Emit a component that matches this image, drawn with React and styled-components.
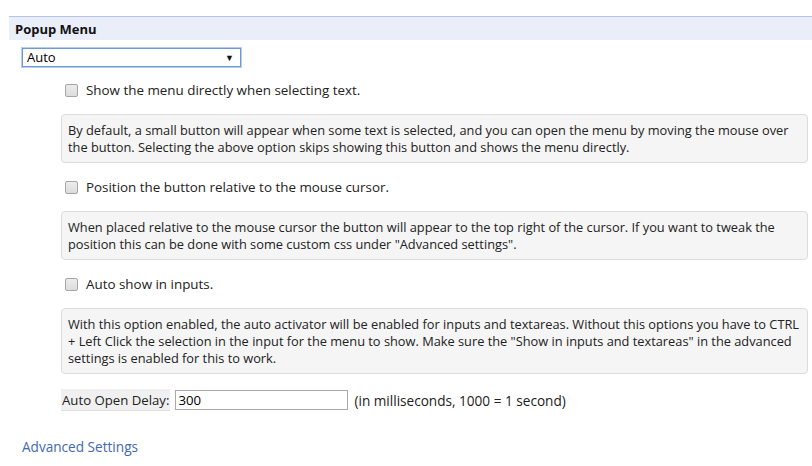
import React from "react";
import styled, { createGlobalStyle } from "styled-components";

const GlobalStyle = createGlobalStyle`
  html, body {
    margin: 0;
    padding: 0;
    background: #fff;
  }
  body {
    font-family: "Open Sans", "Liberation Sans", Arial, sans-serif;
    font-size: 12.8px;
    color: #222;
  }
`;

const options = [
  {
    label: "Show the menu directly when selecting text.",
    help:
      "By default, a small button will appear when some text is selected, and you can open the menu by moving the mouse over the button. Selecting the above option skips showing this button and shows the menu directly.",
  },
  {
    label: "Position the button relative to the mouse cursor.",
    help:
      'When placed relative to the mouse cursor the button will appear to the top right of the cursor. If you want to tweak the position this can be done with some custom css under "Advanced settings".',
  },
  {
    label: "Auto show in inputs.",
    help:
      'With this option enabled, the auto activator will be enabled for inputs and textareas. Without this options you have to CTRL + Left Click the selection in the input for the menu to show. Make sure the "Show in inputs and textareas" in the advanced settings is enabled for this to work.',
  },
];

export default function App() {
  return (
    <Page>
      <GlobalStyle />
      <SectionHeader>Popup Menu</SectionHeader>
      <SelectBox>
        <span>Auto</span>
        <Arrow>▼</Arrow>
      </SelectBox>
      <Options>
        {options.map((o) => (
          <Option key={o.label}>
            <CheckRow>
              <CheckBox />
              <span>{o.label}</span>
            </CheckRow>
            <HelpBox>{o.help}</HelpBox>
          </Option>
        ))}
        <DelayRow>
          <DelayLabel>Auto Open Delay:</DelayLabel>
          <DelayInput>300</DelayInput>
          <span>(in milliseconds, 1000 = 1 second)</span>
        </DelayRow>
      </Options>
      <AdvancedLink>Advanced Settings</AdvancedLink>
    </Page>
  );
}

const Page = styled.div`
  padding: 16px 0 0 9px;
  height: 466px;
  box-sizing: border-box;
  overflow: hidden;
`;

const SectionHeader = styled.div`
  border-top: 1px solid #b4c4e2;
  background: #e9eef8;
  height: 23px;
  line-height: 24px;
  padding-left: 6px;
  font-size: 13px;
  font-weight: bold;
  color: #111;
`;

const SelectBox = styled.div`
  margin: 8px 0 0 13px;
  width: 209px;
  height: 15px;
  border: 1px solid #6f97dc;
  box-shadow: 0 0 0 1px #b9cdf0;
  display: flex;
  align-items: center;
  justify-content: space-between;
  padding: 1px 4px 1px 4px;
  line-height: 15px;
  font-size: 13px;
  color: #000;
`;

const Arrow = styled.span`
  font-size: 9px;
  color: #111;
  margin-right: 2px;
`;

const Options = styled.div`
  margin: 13px 4px 0 52px;
  display: flex;
  flex-direction: column;
`;

const Option = styled.div`
  display: flex;
  flex-direction: column;
  margin-bottom: 14px;
`;

const CheckRow = styled.label`
  display: flex;
  align-items: center;
  height: 20px;
  margin-bottom: 14px;
  padding-left: 4px;
  font-size: 13.4px;
  color: #222;
`;

const CheckBox = styled.span`
  width: 11px;
  height: 11px;
  border: 1px solid #a6a6a6;
  border-radius: 2px;
  background: linear-gradient(#ececec, #dcdcdc);
  margin-right: 8px;
`;

const HelpBox = styled.div`
  background: #f5f5f5;
  border: 1px solid #dcdcdc;
  border-radius: 4px;
  padding: 7px 6px 6px 6px;
  line-height: 17px;
  color: #222;
`;

const DelayRow = styled.div`
  display: flex;
  align-items: center;
  gap: 5px;
  margin-top: 1px;
  font-size: 13.6px;
`;

const DelayLabel = styled.span`
  background: #f0f0f0;
  border-bottom: 1px solid #dedede;
  height: 21px;
  line-height: 22px;
  padding: 0 1px;
  font-size: 13.2px;
  color: #222;
`;

const DelayInput = styled.div`
  width: 167px;
  height: 18px;
  border: 1px solid #a9a9a9;
  padding: 0 2px;
  line-height: 18px;
  font-size: 13.2px;
  color: #000;
  margin-right: 1px;
`;

const AdvancedLink = styled.a`
  display: block;
  margin: 26px 0 0 13px;
  font-size: 13.6px;
  color: #4169b0;
  cursor: pointer;
`;
